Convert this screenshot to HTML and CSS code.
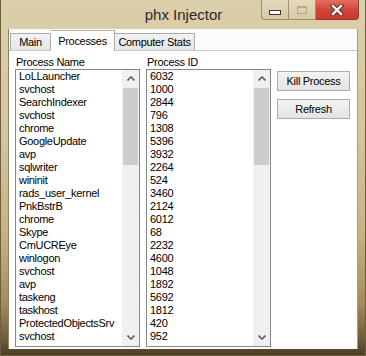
FILE: index.html
```html
<!DOCTYPE html>
<html>
<head>
<meta charset="utf-8">
<link rel="stylesheet" href="styles.css">
</head>
<body>
<div class="window">
  <div class="titlebar">
    <span class="title">phx Injector</span>
    <div class="caption">
      <div class="cb min"><span class="min-glyph"></span></div>
      <div class="cb max"><span class="max-glyph"></span></div>
      <div class="cb close">
        <svg width="14" height="12" viewBox="0 0 14 12">
          <path d="M3 2 L11 10 M11 2 L3 10" stroke="#5a2a22" stroke-width="4.2" stroke-linecap="square"/>
          <path d="M3 2 L11 10 M11 2 L3 10" stroke="#ffffff" stroke-width="2.4" stroke-linecap="square"/>
        </svg>
      </div>
    </div>
  </div>
  <div class="client">
    <div class="tabs">
      <div class="tab">Main</div>
      <div class="tab active">Processes</div>
      <div class="tab">Computer Stats</div>
    </div>
    <div class="page">
      <div class="col">
        <div class="label">Process Name</div>
        <div class="list">
          <div class="items">
            <div>LoLLauncher</div><div>svchost</div><div>SearchIndexer</div><div>svchost</div><div>chrome</div><div>GoogleUpdate</div><div>avp</div><div>sqlwriter</div><div>wininit</div><div>rads_user_kernel</div><div>PnkBstrB</div><div>chrome</div><div>Skype</div><div>CmUCREye</div><div>winlogon</div><div>svchost</div><div>avp</div><div>taskeng</div><div>taskhost</div><div>ProtectedObjectsSrv</div><div>svchost</div>
          </div>
          <div class="sbar">
            <div class="arrow"><svg width="8" height="5" viewBox="0 0 8 5"><path d="M0.5 4.5 L4 1 L7.5 4.5" fill="none" stroke="#606060" stroke-width="1.6"/></svg></div>
            <div class="track"><div class="thumb"></div></div>
            <div class="arrow"><svg width="8" height="5" viewBox="0 0 8 5"><path d="M0.5 0.5 L4 4 L7.5 0.5" fill="none" stroke="#606060" stroke-width="1.6"/></svg></div>
          </div>
        </div>
      </div>
      <div class="col">
        <div class="label">Process ID</div>
        <div class="list">
          <div class="items">
            <div>6032</div><div>1000</div><div>2844</div><div>796</div><div>1308</div><div>5396</div><div>3932</div><div>2264</div><div>524</div><div>3460</div><div>2124</div><div>6012</div><div>68</div><div>2232</div><div>4600</div><div>1048</div><div>1892</div><div>5692</div><div>1812</div><div>420</div><div>952</div>
          </div>
          <div class="sbar">
            <div class="arrow"><svg width="8" height="5" viewBox="0 0 8 5"><path d="M0.5 4.5 L4 1 L7.5 4.5" fill="none" stroke="#606060" stroke-width="1.6"/></svg></div>
            <div class="track"><div class="thumb"></div></div>
            <div class="arrow"><svg width="8" height="5" viewBox="0 0 8 5"><path d="M0.5 0.5 L4 4 L7.5 0.5" fill="none" stroke="#606060" stroke-width="1.6"/></svg></div>
          </div>
        </div>
      </div>
      <div class="buttons">
        <div class="btn">Kill Process</div>
        <div class="btn">Refresh</div>
      </div>
    </div>
  </div>
</div>
</body>
</html>
```
FILE: styles.css
```css
* { box-sizing: border-box; }
html, body { margin: 0; padding: 0; }
body {
  width: 366px;
  height: 356px;
  overflow: hidden;
  font-family: "Liberation Sans", Arial, sans-serif;
}
.window {
  width: 366px;
  height: 356px;
  display: flex;
  flex-direction: column;
  background: linear-gradient(#dbcfab 0%, #d5c79f 35%, #c7b386 65%, #a48e5f 85%, #6b5a37 96%, #4a3d24 100%);
  border: 1px solid #6e5f3f;
  border-top: none;
}
.titlebar {
  height: 29px;
  display: grid;
  margin: 0 -1px;
}
.title {
  grid-area: 1 / 1;
  justify-self: center;
  padding-top: 6px;
  padding-left: 1px;
  font-size: 15px;
  line-height: 18px;
  color: #2a2a2a;
}
.caption {
  grid-area: 1 / 1;
  justify-self: end;
  align-self: start;
  display: flex;
  margin-right: 7px;
}
.cb {
  height: 20px;
  display: flex;
  align-items: center;
  justify-content: center;
  border: 1px solid #a0906a;
  border-top: none;
}
.min {
  width: 27px;
  background: linear-gradient(#e4dabd, #d6c9a5);
  border-right: none;
  border-radius: 0 0 0 4px;
}
.max {
  width: 28px;
  background: linear-gradient(#e4dabd, #d6c9a5);
}
.min-glyph {
  width: 12px;
  height: 5px;
  margin-top: 5px;
  background: #fff;
  border: 1px solid #3a3426;
}
.max-glyph {
  width: 10px;
  height: 8px;
  border: 1px solid #b8a981;
  border-top-width: 2px;
  margin-top: 1px;
}
.close {
  width: 43px;
  background: linear-gradient(#e66d60, #cf4437 55%, #c9392d);
  border-color: #8e3b2f;
  border-left: none;
  border-radius: 0 0 4px 0;
}
.client {
  margin: 0 7px;
  height: 320px;
  display: flex;
  flex-direction: column;
  background: #fbfbfb;
  border-left: 1px solid #8f805e;
  border-right: 1px solid #a8997a;
}
.tabs {
  height: 21px;
  display: flex;
  align-items: flex-end;
  padding-left: 1px;
  font-size: 11px;
  letter-spacing: -0.3px;
  position: relative;
  z-index: 1;
}
.tab {
  height: 17px;
  padding-top: 2px;
  border: 1px solid #acacac;
  border-bottom: none;
  background: linear-gradient(#f2f2f2, #e6e6e6);
  color: #000;
  text-align: center;
}
.tab:first-child { width: 41px; }
.tab:last-child { width: 80px; border-left: none; }
.tab.active {
  width: 64px;
  height: 21px;
  margin-bottom: -1px;
  padding-top: 4px;
  background: #fff;
  border-left: none;
}
.page {
  flex: 1;
  background: #fff;
  border-top: 1px solid #c8c8c8;
  display: flex;
  gap: 6px;
  padding: 5px 0 0 6px;
  font-size: 11px;
  letter-spacing: -0.3px;
}
.col {
  width: 125px;
  display: flex;
  flex-direction: column;
}
.label {
  height: 13px;
  line-height: 13px;
  padding-left: 1px;
}
.list {
  height: 278px;
  border: 1px solid #828790;
  background: #fff;
  display: flex;
}
.items {
  flex: 1;
  padding-left: 3px;
  line-height: 13px;
  overflow: hidden;
}
.items div { height: 13px; }
.sbar {
  width: 17px;
  background: #f0f0f0;
  display: flex;
  flex-direction: column;
}
.arrow {
  height: 17px;
  display: flex;
  align-items: center;
  justify-content: center;
}
.track {
  flex: 1;
  padding: 1px 1px 0 1px;
}
.thumb {
  height: 77px;
  background: #cdcdcd;
}
.buttons {
  width: 73px;
  display: flex;
  flex-direction: column;
  gap: 8px;
  padding-top: 15px;
}
.btn {
  height: 20px;
  border: 1px solid #acacac;
  background: linear-gradient(#f3f3f3, #e4e4e4);
  text-align: center;
  line-height: 18px;
  color: #000;
}
```
